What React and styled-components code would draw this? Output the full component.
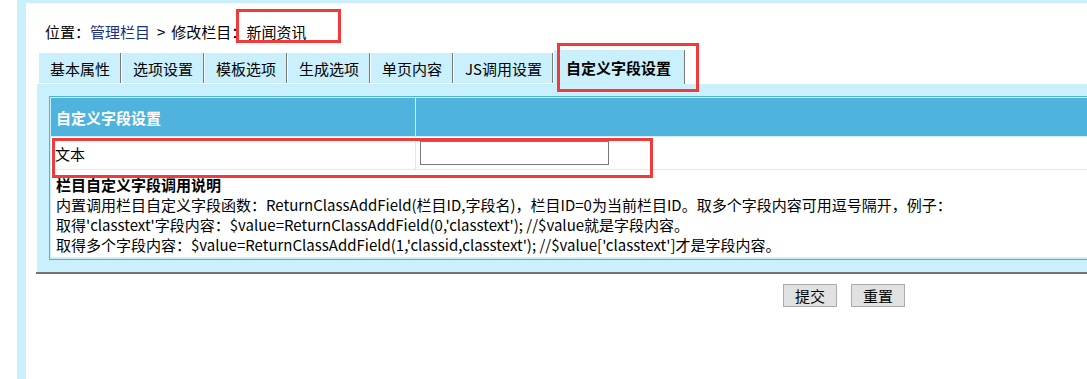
import React from "react";
import styled, { createGlobalStyle } from "styled-components";

const LIGHT = "#c9f0fc";
const BLUE = "#4fb3de";

const GlobalStyle = createGlobalStyle`
	html, body {
		margin: 0;
		padding: 0;
		background: #fff;
		overflow: hidden;
	}
	body {
		font-family: "Microsoft YaHei", "Noto Sans CJK SC", "Noto Sans", sans-serif;
		font-size: 15px;
		color: #000;
	}
`;

const Page = styled.div`
	display: flex;
	min-height: 379px;
	padding-left: 17px;
`;

const SideStrip = styled.div`
	width: 9px;
	flex: none;
	background: ${LIGHT};
`;

const Main = styled.div`
	flex: 1;
	border-top: 3px solid ${LIGHT};
	padding-left: 10px;
`;

const Breadcrumb = styled.div`
	margin-top: 19px;
	padding-left: 9px;
	line-height: 20px;
	white-space: nowrap;
`;

const Link = styled.a`
	color: #1a2f86;
	text-decoration: none;
`;

const Sep = styled.span`
	padding: 0 6px 0 7px;
`;

const Marked = styled.span`
	position: relative;
`;

const Highlight = styled.span`
	position: absolute;
	top: ${(p) => p.$top}px;
	left: ${(p) => p.$left}px;
	width: ${(p) => p.$width}px;
	height: ${(p) => p.$height}px;
	border: 3px solid #f23a3a;
	box-sizing: border-box;
	pointer-events: none;
	z-index: 5;
`;

const Wrapper = styled.div`
	width: 1616px;
	border-bottom: 2px solid #747474;
`;

const Tabs = styled.div`
	display: flex;
	align-items: flex-end;
	height: 34px;
	margin-top: 8px;
	margin-left: 3px;
`;

const Tab = styled.div`
	position: relative;
	display: flex;
	align-items: center;
	height: ${(p) => (p.$active ? 34 : 30)}px;
	margin-bottom: ${(p) => (p.$active ? 0 : 1)}px;
	margin-right: 1px;
	padding: ${(p) => (p.$active ? "0 13px 0 12px" : "0 10px 0 11px")};
	background: ${LIGHT};
	border-right: 1px solid #7a7a7a;
	font-weight: ${(p) => (p.$active ? 700 : 400)};
	white-space: nowrap;
	box-sizing: border-box;
	cursor: pointer;
`;

const Panel = styled.div`
	margin-left: 1px;
	background: ${LIGHT};
	padding: 12px 0 12px 12px;
`;

const Table = styled.div`
	border: 1px solid ${BLUE};
	background: ${LIGHT};
	padding: 1px 1px 2px 1px;
	display: flex;
	flex-direction: column;
	gap: 1px;
`;

const Row = styled.div`
	display: grid;
	grid-template-columns: 364px 1fr;
	column-gap: 1px;
	height: ${(p) => p.$height}px;
	position: relative;
`;

const Cell = styled.div`
	display: flex;
	align-items: center;
	padding-left: ${(p) => p.$pad ?? 4}px;
	background: ${(p) => (p.$header ? BLUE : "#fff")};
	color: ${(p) => (p.$header ? "#fff" : "#000")};
	font-weight: ${(p) => (p.$header ? 700 : 400)};
`;

const TextInput = styled.input`
	width: 189px;
	height: 24px;
	box-sizing: border-box;
	border: 1px solid #7a7a7a;
	padding: 0 3px;
	font: inherit;
	outline: none;
`;

const Notes = styled.div`
	background: #fff;
	padding: 5px 0 2px 5px;
	line-height: 20px;
	white-space: nowrap;
`;

const NoteTitle = styled.div`
	font-weight: 700;
`;

const Actions = styled.div`
	width: 1616px;
	display: flex;
	justify-content: center;
	gap: 14px;
	margin-top: 10px;
`;

const Button = styled.button`
	width: 54px;
	height: 23px;
	padding: 0;
	background: #e1e1e1;
	border: 1px solid #adadad;
	font: inherit;
	line-height: 20px;
	color: #000;
	cursor: pointer;
`;

const tabs = ["基本属性", "选项设置", "模板选项", "生成选项", "单页内容", "JS调用设置"];

export default function App() {
	return (
		<>
			<GlobalStyle />
			<Page>
				<SideStrip />
				<Main>
					<Breadcrumb>
						位置：<Link href="#">管理栏目</Link>
						<Sep>&gt;</Sep>修改栏目：
						<Marked>
							新闻资讯
							<Highlight $top={-12} $left={-10} $width={105} $height={34} />
						</Marked>
					</Breadcrumb>
					<Wrapper>
						<Tabs>
							{tabs.map((t) => (
								<Tab key={t}>{t}</Tab>
							))}
							<Tab $active>
								自定义字段设置
								<Highlight $top={-7} $left={3} $width={142} $height={49} />
							</Tab>
						</Tabs>
						<Panel>
							<Table>
								<Row $height={38}>
									<Cell $header $pad={5}>自定义字段设置</Cell>
									<Cell $header />
								</Row>
								<Row $height={32}>
									<Cell>文本</Cell>
									<Cell>
										<TextInput type="text" />
									</Cell>
									<Highlight $top={1} $left={1} $width={601} $height={40} />
								</Row>
								<Notes>
									<NoteTitle>栏目自定义字段调用说明</NoteTitle>
									<div>
										内置调用栏目自定义字段函数：ReturnClassAddField(栏目ID,字段名)，栏目ID=0为当前栏目ID。取多个字段内容可用逗号隔开，例子：
									</div>
									<div>
										取得'classtext'字段内容：$value=ReturnClassAddField(0,'classtext'); //$value就是字段内容。
									</div>
									<div>
										取得多个字段内容：$value=ReturnClassAddField(1,'classid,classtext'); //$value['classtext']才是字段内容。
									</div>
								</Notes>
							</Table>
						</Panel>
					</Wrapper>
					<Actions>
						<Button type="submit">提交</Button>
						<Button type="reset">重置</Button>
					</Actions>
				</Main>
			</Page>
		</>
	);
}
